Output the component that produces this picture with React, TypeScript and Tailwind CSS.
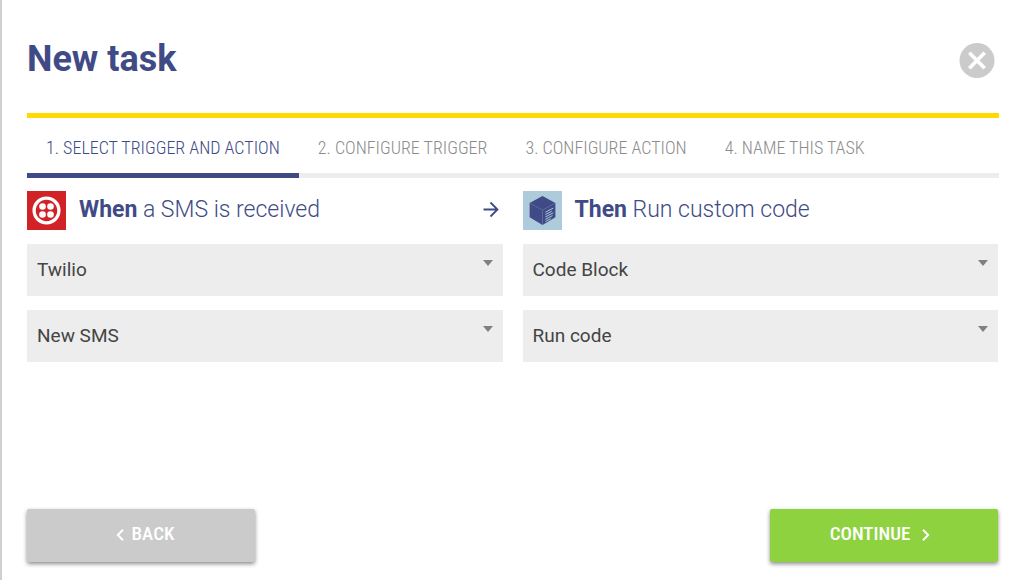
import { useState } from "react";

const steps = [
  "1. Select trigger and action",
  "2. Configure trigger",
  "3. Configure action",
  "4. Name this task",
];

function TwilioIcon() {
  return (
    <svg viewBox="0 0 40 40" className="size-[39px] shrink-0" aria-hidden="true">
      <rect width="40" height="40" fill="#d12227" />
      <circle cx="20" cy="20" r="12.7" fill="none" stroke="#fff" strokeWidth="3.4" />
      <circle cx="15.9" cy="15.9" r="3.4" fill="#fff" />
      <circle cx="24.1" cy="15.9" r="3.4" fill="#fff" />
      <circle cx="15.9" cy="24.1" r="3.4" fill="#fff" />
      <circle cx="24.1" cy="24.1" r="3.4" fill="#fff" />
    </svg>
  );
}

function CodeBlockIcon() {
  return (
    <svg viewBox="0 0 40 40" className="size-[39px] shrink-0" aria-hidden="true">
      <rect width="40" height="40" fill="#adcbda" />
      <path d="M20 5 33.2 12.3V27L20 34.8 6.8 27V12.3Z" fill="#3f4a86" />
      <path d="M6.8 12.3 20 19.6 33.2 12.3M20 19.6V34.8" fill="none" stroke="#6878a6" strokeWidth="0.7" />
      <path
        d="M23 21.8 31 17.6M23 24.2 29.5 20.8M23 26.6 31 22.4M23 29 30.3 25.2M23 31.2 28.5 28.4"
        stroke="#adcbda"
        strokeWidth="1"
        fill="none"
      />
    </svg>
  );
}

function SelectBox({ label, value }: { label: string; value: string }) {
  return (
    <div className="relative">
      <select
        aria-label={label}
        defaultValue={value}
        className="block w-full appearance-none rounded-none bg-[#ededed] py-3 pl-2.5 pr-8 text-[19px] leading-7 text-[#444]"
      >
        <option>{value}</option>
      </select>
      <svg
        viewBox="0 0 10 6"
        className="pointer-events-none absolute right-2.5 top-4 h-1.5 w-2.5"
        aria-hidden="true"
      >
        <path d="M0 0h10L5 6Z" fill="#808080" />
      </svg>
    </div>
  );
}

export default function App() {
  const [step, setStep] = useState(0);

  return (
    <main className="flex min-h-screen flex-col border-l-2 border-[#d0d0d0] bg-white pb-[18px] pl-[25px] pr-[26px] font-['Roboto',sans-serif] text-[#404b86]">
      <header className="flex h-[113px] items-center justify-between pr-[3px] pt-2">
        <h1 className="-mt-1 text-4xl font-bold">New task</h1>
        <button type="button" aria-label="Close" className="size-9 rounded-full">
          <svg viewBox="0 0 36 36" className="size-9" aria-hidden="true">
            <circle cx="18" cy="17.5" r="17.5" fill="#cbcbcb" />
            <path d="m10.3 9.8 15.4 15.4m0-15.4-15.4 15.4" stroke="#fff" strokeWidth="3.6" />
          </svg>
        </button>
      </header>

      <nav
        aria-label="Task steps"
        className="-mr-px flex border-t-[5px] border-[#ffd900] bg-[linear-gradient(#ededed,#ededed)] bg-[length:100%_5px] bg-bottom bg-no-repeat font-['Roboto_Condensed',Roboto,sans-serif] font-light"
      >
        {steps.map((name, index) => (
          <button
            key={name}
            type="button"
            aria-current={index === step ? "step" : undefined}
            onClick={() => setStep(index)}
            className={
              index === step
                ? "h-[60px] whitespace-nowrap border-b-[5px] border-[#404b86] px-[19px] pt-1 text-lg uppercase text-[#404b86]"
                : "h-[60px] whitespace-nowrap border-b-[5px] border-transparent px-[19px] pt-1 text-lg uppercase text-[#8c8c8c]"
            }
          >
            {name}
          </button>
        ))}
      </nav>

      <div className="grid grid-cols-2 gap-5 pt-[13px]">
        <section className="flex flex-col gap-3.5">
          <h2 className="flex h-[39px] items-center gap-[13px] text-[23px] font-light">
            <TwilioIcon />
            <span className="grow pb-px">
              <b className="font-bold">When</b> a SMS is received
            </span>
            <svg viewBox="0 0 24 24" className="size-6 shrink-0" fill="none" stroke="currentColor" strokeWidth="1.8" aria-hidden="true">
              <path d="M4.5 10.5h14M11.5 3.5l7 7-7 7" />
            </svg>
          </h2>
          <SelectBox label="Trigger app" value="Twilio" />
          <SelectBox label="Trigger event" value="New SMS" />
        </section>
        <section className="flex flex-col gap-3.5">
          <h2 className="flex h-[39px] items-center gap-[13px] text-[23px] font-light">
            <CodeBlockIcon />
            <span className="grow pb-px">
              <b className="font-bold">Then</b> Run custom code
            </span>
          </h2>
          <SelectBox label="Action app" value="Code Block" />
          <SelectBox label="Action event" value="Run code" />
        </section>
      </div>

      <footer className="mt-auto flex justify-between font-['Roboto_Condensed',Roboto,sans-serif] text-[19px] font-medium text-white">
        <button
          type="button"
          className="flex h-[53px] w-[228px] items-center justify-center gap-2 rounded-xs bg-[#cbcbcb] pb-0.5 pl-2 shadow-[0_2px_4px_rgba(0,0,0,0.45)]"
        >
          <svg viewBox="0 0 8 12" className="h-3 w-2" fill="none" stroke="currentColor" strokeWidth="2" aria-hidden="true">
            <path d="M7 .8 1.8 6 7 11.2" />
          </svg>
          BACK
        </button>
        <button
          type="button"
          className="flex h-[53px] w-[228px] items-center justify-center gap-3 rounded-xs bg-[#8ed33f] pb-0.5 pr-2 shadow-[0_2px_4px_rgba(0,0,0,0.45)]"
        >
          CONTINUE
          <svg viewBox="0 0 8 12" className="h-3 w-2" fill="none" stroke="currentColor" strokeWidth="2" aria-hidden="true">
            <path d="M1 .8 6.2 6 1 11.2" />
          </svg>
        </button>
      </footer>
    </main>
  );
}
